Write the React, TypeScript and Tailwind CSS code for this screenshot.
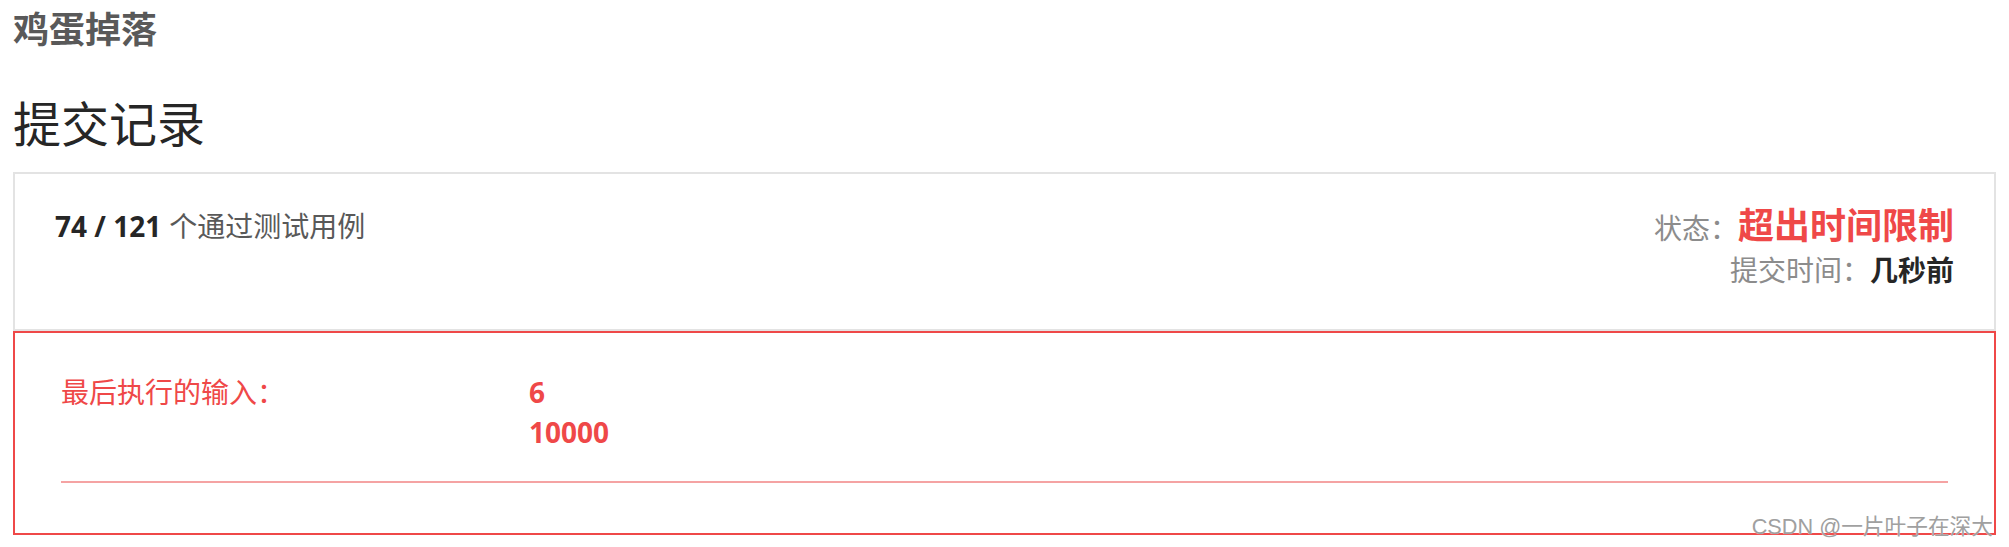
import React from "react";

const FONT = { fontFamily: '"Open Sans", "Noto Sans CJK SC", sans-serif' };

export default function App() {
  return (
    <div
      className="relative min-h-[547px] w-full bg-white px-[13px] pt-[8px]"
      style={FONT}
    >
      <h3 className="text-[36px] leading-[44px] font-bold text-[#595959]">鸡蛋掉落</h3>
      <h2 className="mt-[42px] text-[48px] leading-[60px] font-normal text-[#262626]">提交记录</h2>

      <div className="mt-[18px]">
        <div className="flex h-[159px] items-start justify-between border-2 border-[#e3e3e3] px-[40px] pt-[30px]">
          <div className="text-[28px] leading-[44px] text-[#595959]">
            <span className="font-bold text-[#262626]">74 / 121</span>
            <span className="ml-[8px]">个通过测试用例</span>
          </div>
          <div className="flex flex-col items-end">
            <div className="h-[44px] leading-[44px] text-[28px] text-[#8c8c8c]">
              状态：<span className="text-[36px] font-bold text-[#ef4848]">超出时间限制</span>
            </div>
            <div className="h-[44px] leading-[44px] text-[28px] text-[#8c8c8c]">
              提交时间：<span className="font-bold text-[#262626]">几秒前</span>
            </div>
          </div>
        </div>

        <div className="h-[204px] border-2 border-[#ef4848] px-[46px] pt-[39px]">
          <div className="flex text-[28px] leading-[40px] text-[#ef4848]">
            <div className="w-[468px] shrink-0">最后执行的输入：</div>
            <div className="font-bold">
              <div>6</div>
              <div>10000</div>
            </div>
          </div>
          <div className="mt-[29px] h-[2px] bg-[#f5a3a3]" />
        </div>
      </div>

      <div
        className="absolute bottom-[10px] right-[16px] text-[21.7px] leading-[21px] text-[#a0a0a0]"
        style={{ fontFamily: '"Liberation Sans", "Noto Sans CJK SC", sans-serif', textShadow: "0 0 1px #fff" }}
      >
        CSDN @一片叶子在深大
      </div>
    </div>
  );
}
